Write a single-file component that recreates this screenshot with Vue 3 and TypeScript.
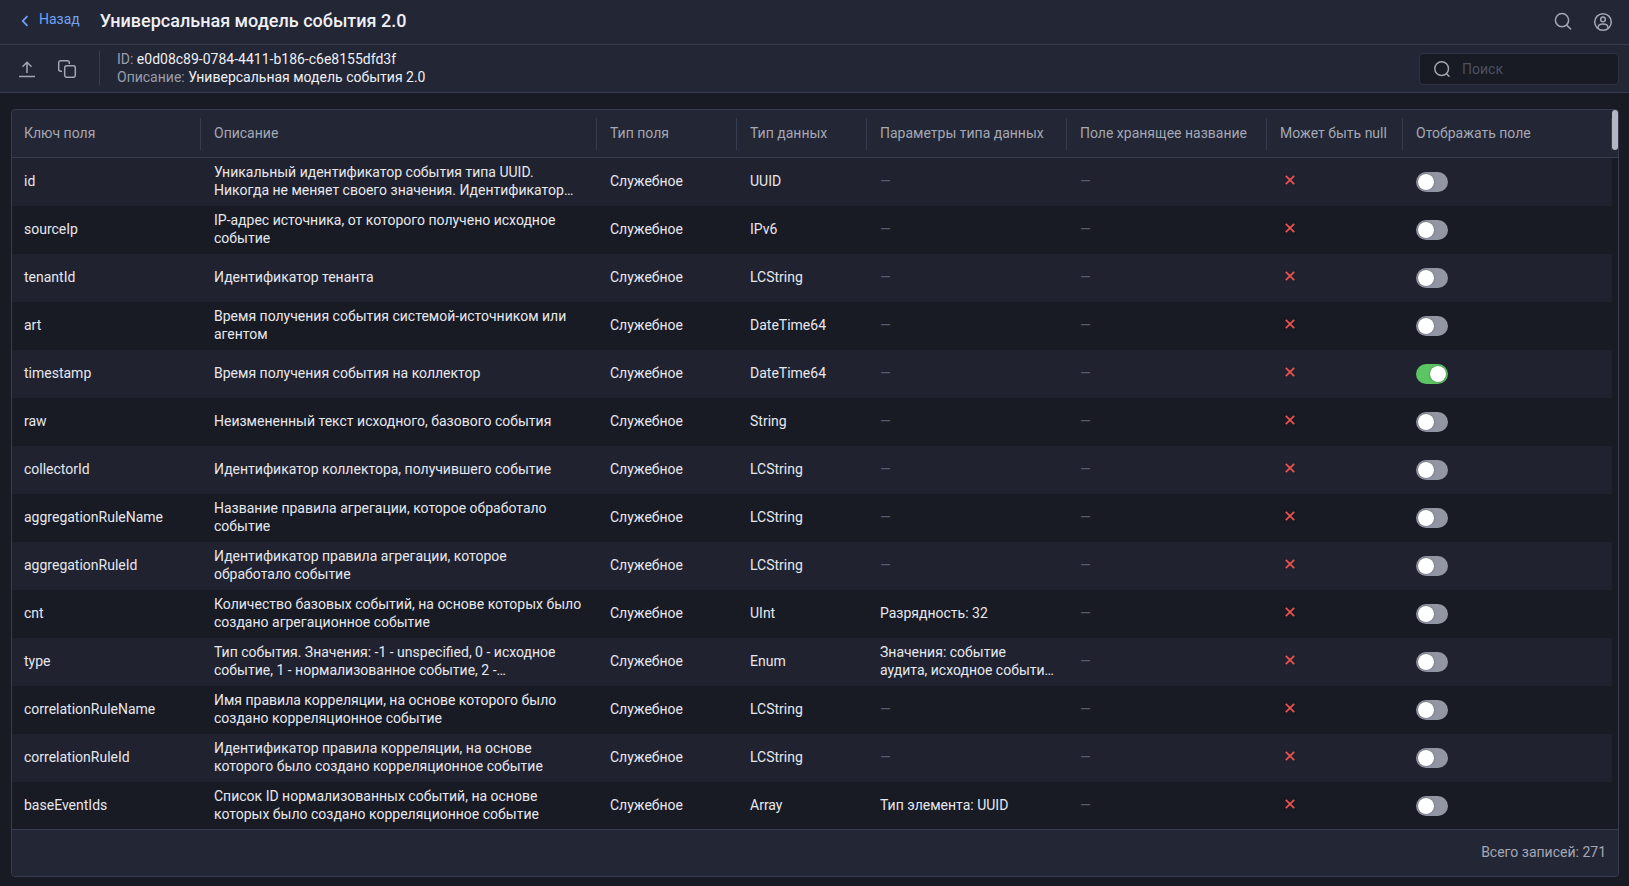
<template>
  <div class="page">
    <header class="topbar">
      <a class="back-link">
        <svg class="back-icon" width="8" height="12" viewBox="0 0 8 12">
          <path d="M6.400 1.200 1.800 6l4.600 4.800" fill="none" stroke="currentColor" stroke-width="1.800" />
        </svg>
        <span>Назад</span>
      </a>
      <h1 class="title">Универсальная модель события 2.0</h1>
      <div class="topbar-icons">
        <svg width="20" height="20" viewBox="0 0 20 20" fill="none" stroke="#a4a7b2" stroke-width="1.5">
          <circle cx="9" cy="8.200" r="6.600" />
          <path d="m14 13.400 3.600 3.600" stroke-linecap="round" />
        </svg>
        <svg width="20" height="20" viewBox="0 0 20 20" fill="none" stroke="#a4a7b2" stroke-width="1.5">
          <circle cx="10" cy="10" r="8.300" />
          <circle cx="10" cy="7.400" r="2.300" />
          <path d="M5.200 15.800c-.4-2.600 1.600-3.800 4.800-3.800s5.200 1.200 4.800 3.800" />
        </svg>
      </div>
    </header>

    <div class="subbar">
      <div class="actions">
        <svg width="20" height="20" viewBox="0 0 20 20" fill="none" stroke="#a4a7b2" stroke-width="1.500">
          <path d="M10 15V4.500M5.500 8.800 10 4.300l4.500 4.500M2 18.500h16" />
        </svg>
        <svg width="20" height="20" viewBox="0 0 20 20" fill="none" stroke="#a4a7b2" stroke-width="1.500">
          <path d="M5 13.300H3.700a2 2 0 0 1-2-2V4.700a2 2 0 0 1 2-2h6.600a2 2 0 0 1 2 2V6" />
          <rect x="7.700" y="7.700" width="10.600" height="11.600" rx="2" />
        </svg>
      </div>
      <div class="meta">
        <div><span class="meta-label">ID: </span>e0d08c89-0784-4411-b186-c6e8155dfd3f</div>
        <div><span class="meta-label">Описание: </span>Универсальная модель события 2.0</div>
      </div>
      <label class="search">
        <svg width="18" height="18" viewBox="0 0 20 20" fill="none" stroke="#a4a7b2" stroke-width="1.600">
          <circle cx="9.600" cy="9.600" r="7.600" />
          <path d="m15 15.200 2.800 2.800" stroke-linecap="round" />
        </svg>
        <input class="search-input" placeholder="Поиск" />
      </label>
    </div>

    <main class="content">
      <section class="card">
        <div class="table-wrap">
          <table class="fields">
            <colgroup>
              <col v-for="w in colWidths" :key="w.name" :style="{ width: w.width + 'px' }" />
              <col />
            </colgroup>
            <thead>
              <tr>
                <th v-for="w in colWidths" :key="w.name">
                  <div class="th-inner">{{ w.name }}</div>
                </th>
                <th></th>
              </tr>
            </thead>
            <tbody>
              <tr v-for="row in rows" :key="row.key">
                <td>{{ row.key }}</td>
                <td><div class="clamp">{{ row.desc }}</div></td>
                <td>Служебное</td>
                <td>{{ row.type }}</td>
                <td>
                  <div v-if="row.params" class="clamp">{{ row.params }}</div>
                  <span v-else class="dash">—</span>
                </td>
                <td><span class="dash">—</span></td>
                <td>
                  <svg class="cross" width="20" height="20" viewBox="0 0 20 20">
                    <path d="m5.800 5.800 8.400 8.400M14.200 5.800l-8.400 8.400" stroke="#ee5350" stroke-width="1.700" />
                  </svg>
                </td>
                <td>
                  <span class="toggle" :class="{ on: row.visible }"><span class="knob"></span></span>
                </td>
              </tr>
            </tbody>
          </table>
        </div>
        <div class="scroll-thumb"></div>
        <footer class="card-footer">Всего записей: 271</footer>
      </section>
    </main>
  </div>
</template>

<script setup lang="ts">
interface FieldRow {
  key: string
  desc: string
  type: string
  params?: string
  visible?: boolean
}

const colWidths = [
  { name: 'Ключ поля', width: 189 },
  { name: 'Описание', width: 396 },
  { name: 'Тип поля', width: 140 },
  { name: 'Тип данных', width: 130 },
  { name: 'Параметры типа данных', width: 200 },
  { name: 'Поле хранящее название', width: 200 },
  { name: 'Может быть null', width: 136 },
  { name: 'Отображать поле', width: 209 },
]

const rows: FieldRow[] = [
  { key: 'id', desc: 'Уникальный идентификатор события типа UUID. Никогда не меняет своего значения. Идентификатор присваивается при создании события', type: 'UUID' },
  { key: 'sourceIp', desc: 'IP-адрес источника, от которого получено исходное событие', type: 'IPv6' },
  { key: 'tenantId', desc: 'Идентификатор тенанта', type: 'LCString' },
  { key: 'art', desc: 'Время получения события системой-источником или агентом', type: 'DateTime64' },
  { key: 'timestamp', desc: 'Время получения события на коллектор', type: 'DateTime64', visible: true },
  { key: 'raw', desc: 'Неизмененный текст исходного, базового события', type: 'String' },
  { key: 'collectorId', desc: 'Идентификатор коллектора, получившего событие', type: 'LCString' },
  { key: 'aggregationRuleName', desc: 'Название правила агрегации, которое обработало событие', type: 'LCString' },
  { key: 'aggregationRuleId', desc: 'Идентификатор правила агрегации, которое обработало событие', type: 'LCString' },
  { key: 'cnt', desc: 'Количество базовых событий, на основе которых было создано агрегационное событие', type: 'UInt', params: 'Разрядность: 32' },
  { key: 'type', desc: 'Тип события. Значения: -1 - unspecified, 0 - исходное событие, 1 - нормализованное событие, 2 - агрегационное событие', type: 'Enum', params: 'Значения: событие аудита, исходное событие нормализованное событие' },
  { key: 'correlationRuleName', desc: 'Имя правила корреляции, на основе которого было создано корреляционное событие', type: 'LCString' },
  { key: 'correlationRuleId', desc: 'Идентификатор правила корреляции, на основе которого было создано корреляционное событие', type: 'LCString' },
  { key: 'baseEventIds', desc: 'Список ID нормализованных событий, на основе которых было создано корреляционное событие', type: 'Array', params: 'Тип элемента: UUID' },
]
</script>

<style>
html,
body {
  margin: 0;
  background: #181a24;
}
</style>

<style scoped>
.page {
  height: 100vh;
  display: flex;
  flex-direction: column;
  background: #181a24;
  color: #e6e8ee;
  font-family: Roboto, 'Noto Sans', sans-serif;
  font-size: 14px;
  line-height: 18px;
  overflow: hidden;
}

.topbar {
  height: 44px;
  flex: none;
  display: flex;
  align-items: center;
  padding: 0 16px 0 21px;
  background: #232634;
  border-bottom: 1px solid #383c50;
}

.back-link {
  display: flex;
  align-items: center;
  gap: 10px;
  color: #6ea3f5;
  margin-right: 20px;
  margin-top: -6px;
}

.back-icon {
  margin-top: 3px;
}

.title {
  margin: -2px 0 0;
  font-size: 18px;
  font-weight: 500;
  line-height: 24px;
  color: #eef0f5;
}

.topbar-icons {
  margin-left: auto;
  display: flex;
  gap: 20px;
}

.subbar {
  height: 48px;
  flex: none;
  box-sizing: border-box;
  display: flex;
  align-items: center;
  padding: 0 10px 1px 17px;
  background: #232634;
  border-bottom: 1px solid #383c50;
}

.actions {
  display: flex;
  gap: 20px;
  padding-right: 22px;
  height: 34px;
  align-items: center;
  border-right: 1px solid #383c50;
  margin-right: 17px;
}

.meta {
  color: #eef0f5;
}

.meta-label {
  color: #9a9eab;
}

.search {
  margin-left: auto;
  margin-top: 2px;
  width: 200px;
  height: 32px;
  box-sizing: border-box;
  display: flex;
  align-items: center;
  gap: 11px;
  padding-left: 13px;
  background: #181a24;
  border: 1px solid #2f3244;
  border-radius: 4px;
}

.search-input {
  width: 130px;
  border: 0;
  outline: 0;
  padding: 0;
  background: transparent;
  color: #e6e8ee;
  font: inherit;
}

.search-input::placeholder {
  color: #4d5060;
  opacity: 1;
}

.content {
  flex: 1;
  min-height: 0;
  display: flex;
  padding: 16px 10px 9px 11px;
}

.card {
  flex: 1;
  min-width: 0;
  display: flex;
  flex-direction: column;
  position: relative;
  border: 1px solid #383c50;
  border-radius: 4px;
}

.table-wrap {
  flex: 1;
  min-height: 0;
  overflow: hidden;
  border-radius: 4px 4px 0 0;
}

.fields {
  width: 100%;
  table-layout: fixed;
  border-collapse: separate;
  border-spacing: 0;
}

.fields th {
  height: 48px;
  box-sizing: border-box;
  padding: 8px 0 0;
  vertical-align: top;
  background: #232634;
  border-bottom: 1px solid #383c50;
  color: #a4a8b5;
  font-weight: 400;
  text-align: left;
}

.th-inner {
  height: 32px;
  line-height: 30px;
  padding-left: 13px;
  border-right: 1px solid #383c50;
}

.fields th:first-child .th-inner {
  padding-left: 12px;
}

.fields td {
  height: 48px;
  box-sizing: border-box;
  padding: 0 13px 2px;
  overflow: hidden;
  white-space: nowrap;
}

.fields td:first-child {
  padding-left: 12px;
}

.fields td:nth-child(2),
.fields td:nth-child(5) {
  white-space: normal;
}

.fields tbody tr:nth-child(odd) td {
  background: #20222f;
}

.clamp {
  display: -webkit-box;
  -webkit-box-orient: vertical;
  -webkit-line-clamp: 2;
  overflow: hidden;
}

.dash {
  color: #565a69;
}

.cross {
  display: block;
  margin-top: -2px;
}

.toggle {
  display: block;
  width: 32px;
  height: 20px;
  margin-top: 2px;
  border-radius: 10px;
  background: #9296a3;
  position: relative;
}

.toggle.on {
  background: #5bc463;
}

.knob {
  position: absolute;
  top: 2px;
  left: 2px;
  width: 16px;
  height: 16px;
  border-radius: 50%;
  background: #fff;
  box-shadow: 0 0 2px rgba(0, 0, 0, 0.45);
}

.toggle.on .knob {
  left: 14px;
}

.scroll-thumb {
  position: absolute;
  top: 0;
  right: 0;
  width: 6px;
  height: 40px;
  border-radius: 3px;
  background: #b4b7c1;
}

.card-footer {
  height: 47px;
  flex: none;
  box-sizing: border-box;
  display: flex;
  align-items: center;
  justify-content: flex-end;
  padding: 0 12px 2px 0;
  background: #232634;
  border-top: 1px solid #383c50;
  border-radius: 0 0 4px 4px;
  color: #a4a8b5;
}
</style>
